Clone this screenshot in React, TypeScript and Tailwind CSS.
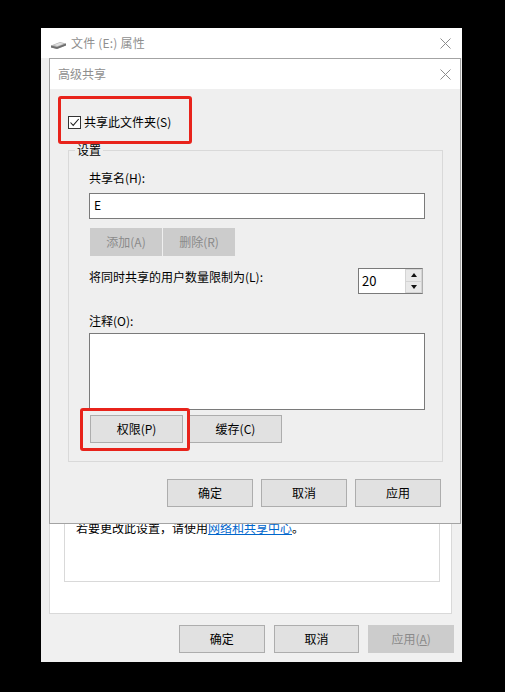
const fontStack = { fontFamily: '"Noto Sans CJK SC", "Liberation Sans", sans-serif' };

function Btn({ label, className = "", disabled = false }: { label: React.ReactNode; className?: string; disabled?: boolean }) {
  return (
    <div
      className={
        "flex items-center justify-center border text-xs " +
        (disabled ? "border-[#cccccc] bg-[#cccccc] text-[#8a8a8a] " : "border-[#adadad] bg-[#e1e1e1] text-black ") +
        className
      }
    >
      {label}
    </div>
  );
}

function CloseIcon() {
  return (
    <svg width="11" height="11" viewBox="0 0 11 11" className="block">
      <path d="M0.5 0.5 L10.5 10.5 M10.5 0.5 L0.5 10.5" stroke="#8c8c8c" strokeWidth="1" fill="none" />
    </svg>
  );
}

function DriveIcon() {
  return (
    <svg width="15" height="8" viewBox="0 0 15 8" className="mt-[3px] block">
      <path d="M0 4.5 L9 1 L15 2.5 L15 4.5 L6 8 L0 6.5 Z" fill="#b8b8b8" />
      <path d="M0 4.5 L6 6 L15 2.5 L15 4.5 L6 8 L0 6.5 Z" fill="#6f6f6f" />
      <path d="M3 4 L9 1.8 L12.5 2.7 L6.5 5 Z" fill="#e2e2e2" />
    </svg>
  );
}

function AdvancedDialog() {
  return (
    <div className="absolute left-[8px] top-0 flex h-[466px] w-[412px] flex-col border border-[#a3a3a3] bg-[#efefef]">
      <div className="flex h-[30px] shrink-0 items-center justify-between bg-white pl-[8px] pr-[9px] text-xs text-[#8f8f8f]">
        <span>高级共享</span>
        <CloseIcon />
      </div>

      <div className="flex flex-1 flex-col pl-[18px] pr-[17px]">
        <label className="mt-[26px] flex h-[14px] items-center gap-[3px] text-xs text-black">
          <span className="flex h-[13px] w-[13px] items-center justify-center border border-[#333] bg-white">
            <svg width="11" height="11" viewBox="0 0 11 11">
              <path d="M1.5 5.5 L4.2 8.4 L9.7 2" stroke="#222" strokeWidth="1.1" fill="none" />
            </svg>
          </span>
          共享此文件夹(S)
        </label>

        <div className="mt-[21px] flex h-[312px] w-[375px] flex-col border border-[#d9d9d9] pl-[20px] pr-[17px]">
          <span className="-ml-[14px] -mt-[7px] w-fit bg-[#efefef] px-[2px] text-xs leading-[12px] text-black">设置</span>
          <div className="mt-[14px] text-xs leading-[16px] text-black">共享名(H):</div>
          <div className="mt-[7px] flex h-[26px] w-[336px] shrink-0 items-center border border-[#7a7a7a] bg-white pb-[2px] pl-[4px] text-xs text-black">
            E
          </div>
          <div className="mt-[9px] flex gap-px pl-px">
            <Btn label="添加(A)" disabled className="h-[28px] w-[72px]" />
            <Btn label="删除(R)" disabled className="h-[28px] w-[72px]" />
          </div>
          <div className="mt-[12px] flex items-start justify-between pr-[2px] text-xs text-black">
            <span className="leading-[18px]">将同时共享的用户数量限制为(L):</span>
            <div className="flex h-[26px] w-[65px] border border-[#b0b0b0] border-l-[#7a7a7a] border-t-[#7a7a7a] border-b-[#7a7a7a] bg-white">
              <div className="flex flex-1 items-center pl-[3px] text-[13px]">20</div>
              <div className="flex w-[17px] flex-col gap-px bg-[#d4d4d4] p-px">
                <div className="flex flex-1 items-center justify-center bg-[#e9e9e9]">
                  <div className="h-0 w-0 border-x-[3px] border-b-[4px] border-x-transparent border-b-[#111]" />
                </div>
                <div className="flex flex-1 items-center justify-center bg-[#e9e9e9]">
                  <div className="h-0 w-0 border-x-[3px] border-t-[4px] border-x-transparent border-t-[#111]" />
                </div>
              </div>
            </div>
          </div>
          <div className="mt-[19px] text-xs leading-[16px] text-black">注释(O):</div>
          <div className="mt-[4px] h-[77px] w-[336px] shrink-0 border border-[#7a7a7a] bg-white" />
          <div className="mt-[5px] flex gap-[6px] pl-px">
            <Btn label="权限(P)" className="h-[28px] w-[93px]" />
            <Btn label="缓存(C)" className="h-[28px] w-[93px]" />
          </div>
        </div>

        <div className="mt-[17px] flex justify-end gap-[8px] pr-[2px]">
          <Btn label="确定" className="h-[28px] w-[86px]" />
          <Btn label="取消" className="h-[28px] w-[86px]" />
          <Btn label="应用" className="h-[28px] w-[86px]" />
        </div>
      </div>

      {/* red annotation boxes */}
      <div className="absolute left-[8px] top-[37px] h-[48px] w-[134px] rounded-[3px] border-[3px] border-[#e8231b]" />
      <div className="absolute left-[30px] top-[349px] h-[43px] w-[110px] rounded-[3px] border-[3px] border-[#e8231b]" />
    </div>
  );
}

export default function App() {
  return (
    <div className="h-[692px] w-[505px] overflow-hidden bg-black pl-[41px] pt-[28px]" style={fontStack}>
      <div className="flex h-[634px] w-[421px] flex-col bg-[#f0f0f0]">
        <div className="flex h-[30px] shrink-0 items-center justify-between bg-white pl-[10px] pr-[11px] text-xs text-[#8f8f8f]">
          <span className="flex items-center gap-[5px] tracking-[0.2px]">
            <DriveIcon />
            文件 (E:) 属性
          </span>
          <CloseIcon />
        </div>

        <div className="relative flex flex-1 flex-col px-[8px]">
          <div className="flex h-[556px] w-[403px] flex-col border border-[#d9d9d9] bg-white pl-[14px] pr-[11px] pt-[430px]">
            <div className="flex h-[93px] w-[376px] flex-col border border-[#d9d9d9] pl-[11px] pt-[30px]">
              <p className="text-xs leading-[16px] text-black">
                若要更改此设置，请使用<span className="text-[#0066cc] underline">网络和共享中心</span>。
              </p>
            </div>
          </div>

          <div className="mt-[11px] flex justify-end gap-[9px] pl-[130px] pr-0">
            <Btn label="确定" className="h-[28px] w-[86px]" />
            <Btn label="取消" className="h-[28px] w-[86px]" />
            <Btn label={<span>应用(<u>A</u>)</span>} disabled className="h-[28px] w-[86px]" />
          </div>

          <AdvancedDialog />
        </div>
      </div>
    </div>
  );
}
